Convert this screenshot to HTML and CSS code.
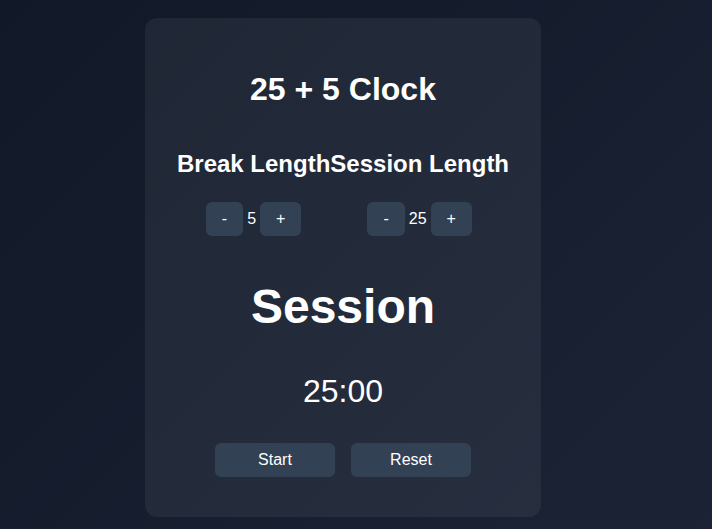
FILE: index.html
```html
<!DOCTYPE html>
<html lang="en">
<head>
<meta charset="utf-8">
<title>25 + 5 Clock</title>
<link rel="stylesheet" href="styles.css">
</head>
<body>
  <main class="card">
    <h1 class="title">25 + 5 Clock</h1>
    <div class="lengths">
      <div class="length">
        <h2 class="length-label">Break Length</h2>
        <div class="controls">
          <button class="btn">-</button>
          <span class="value">5</span>
          <button class="btn">+</button>
        </div>
      </div>
      <div class="length">
        <h2 class="length-label">Session Length</h2>
        <div class="controls">
          <button class="btn">-</button>
          <span class="value">25</span>
          <button class="btn">+</button>
        </div>
      </div>
    </div>
    <h2 class="timer-label">Session</h2>
    <div class="time">25:00</div>
    <div class="actions">
      <button class="btn btn-wide">Start</button>
      <button class="btn btn-wide">Reset</button>
    </div>
  </main>
</body>
</html>
```

FILE: styles.css
```css
html, body {
  height: 100%;
}
body {
  margin: 0;
  box-sizing: border-box;
  padding: 18px 26px 0 0;
  display: flex;
  justify-content: center;
  align-items: flex-start;
  background: linear-gradient(135deg, #111827 0%, #1b2335 100%);
  font-family: "Liberation Sans", Arial, sans-serif;
  color: #ffffff;
}
.card {
  padding: 32px;
  border-radius: 12px;
  background: rgba(255, 255, 255, 0.06);
  text-align: center;
}
.title {
  font-size: 32px;
  font-weight: bold;
  margin: 21px 0 21px;
}
.lengths {
  display: flex;
  justify-content: center;
}
.length {
  display: flex;
  flex-direction: column;
  align-items: center;
}
.length-label {
  font-size: 24px;
  font-weight: bold;
  margin: 21px 0 0;
  white-space: nowrap;
}
.controls {
  display: flex;
  align-items: center;
  gap: 4px;
  margin-top: 24px;
}
.value {
  font-size: 16px;
}
.btn {
  font-family: "Liberation Sans", Arial, sans-serif;
  font-size: 16px;
  line-height: normal;
  padding: 8px 16px;
  border: none;
  border-radius: 6px;
  background: #334155;
  color: #ffffff;
}
.timer-label {
  font-size: 48px;
  font-weight: bold;
  margin: 43px 0 39px;
}
.time {
  font-size: 32px;
  margin-bottom: 33px;
}
.actions {
  display: flex;
  justify-content: center;
  gap: 16px;
  margin-bottom: 8px;
}
.btn-wide {
  width: 120px;
}
```
